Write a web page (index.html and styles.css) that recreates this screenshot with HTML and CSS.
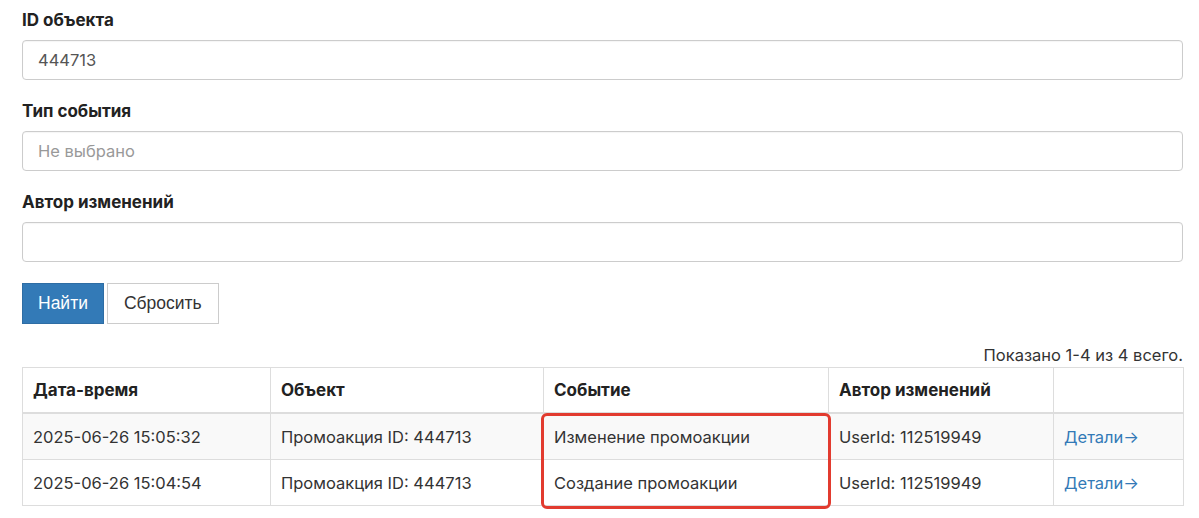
FILE: index.html
```html
<!DOCTYPE html>
<html lang="ru">
<head>
<meta charset="utf-8">
<title>Журнал изменений</title>
<link rel="stylesheet" href="styles.css">
</head>
<body>
<div class="page">
  <form class="filters">
    <div class="form-group">
      <label class="label">ID объекта</label>
      <div class="input">444713</div>
    </div>
    <div class="form-group">
      <label class="label">Тип события</label>
      <div class="input placeholder">Не выбрано</div>
    </div>
    <div class="form-group">
      <label class="label">Автор изменений</label>
      <div class="input"></div>
    </div>
    <div class="actions">
      <button type="button" class="btn btn-primary">Найти</button>
      <button type="button" class="btn btn-default">Сбросить</button>
    </div>
  </form>

  <div class="summary">Показано 1-4 из 4 всего.</div>

  <div class="table-wrap">
    <table class="grid">
      <colgroup>
        <col class="c1"><col class="c2"><col class="c3"><col class="c4"><col class="c5">
      </colgroup>
      <thead>
        <tr>
          <th>Дата-время</th>
          <th>Объект</th>
          <th>Событие</th>
          <th>Автор изменений</th>
          <th></th>
        </tr>
      </thead>
      <tbody>
        <tr>
          <td>2025-06-26 15:05:32</td>
          <td>Промоакция ID: 444713</td>
          <td>Изменение промоакции</td>
          <td>UserId: 112519949</td>
          <td><a class="link" href="#">Детали→</a></td>
        </tr>
        <tr>
          <td>2025-06-26 15:04:54</td>
          <td>Промоакция ID: 444713</td>
          <td>Создание промоакции</td>
          <td>UserId: 112519949</td>
          <td><a class="link" href="#">Детали→</a></td>
        </tr>
      </tbody>
    </table>
    <div class="highlight"></div>
  </div>
</div>
</body>
</html>
```

FILE: styles.css
```css
* { box-sizing: border-box; }
html, body { margin: 0; padding: 0; background: #fff; }
body {
  font-family: Inter, "Noto Sans", "DejaVu Sans", sans-serif;
  font-size: 16.5px;
  line-height: 22px;
  color: #333;
}
.page {
  width: 1161px;
  margin-left: 22px;
  padding-top: 9px;
  padding-bottom: 20px;
}
.form-group { margin-bottom: 20px; }
.label {
  display: block;
  font-weight: 700;
  font-size: 17px;
  color: #222;
  margin-bottom: 9px;
}
.input {
  height: 40px;
  border: 1px solid #ccc;
  border-radius: 4px;
  padding: 0 15px;
  display: flex;
  align-items: center;
  color: #555;
  box-shadow: inset 0 1px 1px rgba(0,0,0,0.04);
}
.input.placeholder { color: #999; }
.actions {
  display: flex;
  gap: 3px;
  padding-top: 1px;
}
.btn {
  height: 41px;
  padding: 0 15px;
  font-family: "Liberation Sans", Arial, sans-serif;
  font-size: 17.5px;
  border: 1px solid #ccc;
  border-radius: 0;
  background: #fff;
  color: #333;
}
.btn-default { padding: 0 16px; }
.btn-primary {
  background: #337ab7;
  border-color: #2e6da4;
  color: #fff;
}
.summary {
  margin-top: 20px;
  text-align: right;
  color: #333;
  line-height: 22px;
  margin-bottom: 1px;
}
.table-wrap { position: relative; }
.grid {
  width: 100%;
  border-collapse: collapse;
  table-layout: fixed;
  border: 1px solid #ddd;
}
.c1 { width: 248px; }
.c2 { width: 273px; }
.c3 { width: 285px; }
.c4 { width: 225px; }
.c5 { width: 130px; }
.grid th, .grid td {
  border: 1px solid #ddd;
  text-align: left;
  padding: 11px 10px;
  white-space: nowrap;
}
.grid td { padding: 12px 10px 11px; }
.grid th {
  font-weight: 700;
  font-size: 17px;
  color: #222;
  border-bottom-width: 2px;
}
.grid tbody tr:nth-child(odd) { background: #f9f9f9; }
.link { color: #337ab7; text-decoration: none; }
.highlight {
  position: absolute;
  left: 519px;
  top: 46px;
  width: 290px;
  height: 96px;
  border: 3.5px solid #e23b2f;
  border-radius: 6px;
}
```
